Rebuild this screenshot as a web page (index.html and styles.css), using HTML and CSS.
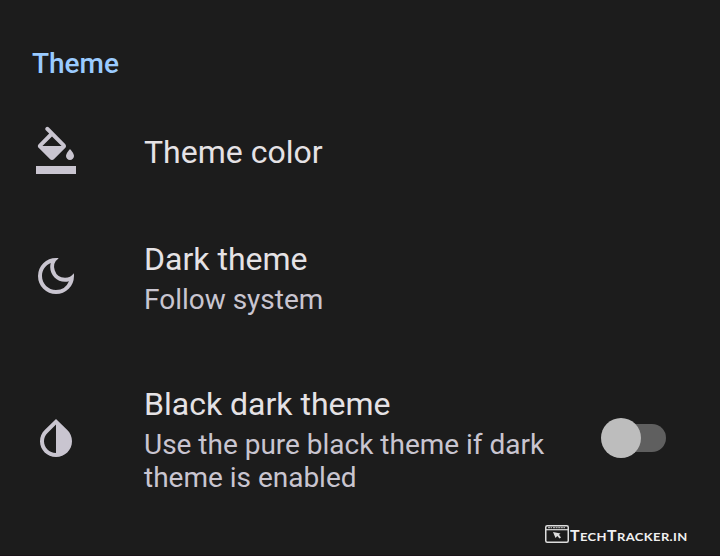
FILE: index.html
```html
<!DOCTYPE html>
<html lang="en">
<head>
<meta charset="utf-8">
<title>Theme</title>
<link rel="stylesheet" href="styles.css">
</head>
<body>
<main class="settings">
  <h1 class="section">Theme</h1>
  <div class="row row-color">
    <svg class="icon" viewBox="0 0 24 24"><path d="M16.56 8.94L8.3.68Q7.62 0 6.9.7 6.2 1.4 6.9 2.1l1.69 1.69-5.15 5.15a1.49 1.49 0 0 0 0 2.12l5.5 5.5c.29.29.68.44 1.06.44s.77-.15 1.06-.44l5.5-5.5c.59-.58.59-1.53 0-2.12zM5.21 10L10 5.21 14.79 10H5.21zM19 11.5s-2 2.17-2 3.5c0 1.1.9 2 2 2s2-.9 2-2c0-1.33-2-3.5-2-3.5zM2 20h20v4H2z"/></svg>
    <div class="text"><div class="title">Theme color</div></div>
  </div>
  <div class="row row-dark">
    <svg class="icon" viewBox="0 0 24 24"><path d="M9.37 5.51A7.35 7.35 0 0 0 9.1 7.5c0 4.08 3.32 7.4 7.4 7.4.68 0 1.35-.09 1.99-.27A7.014 7.014 0 0 1 12 19c-3.86 0-7-3.14-7-7 0-2.93 1.81-5.45 4.37-6.49zM12 3a9 9 0 1 0 9 9c0-.46-.04-.92-.1-1.36a5.389 5.389 0 0 1-4.4 2.26 5.403 5.403 0 0 1-3.14-9.8c-.44-.06-.9-.1-1.36-.1z"/></svg>
    <div class="text"><div class="title">Dark theme</div><div class="summary">Follow system</div></div>
  </div>
  <div class="row row-black">
    <svg class="icon" viewBox="0 0 24 24"><path d="M12 4.81V19c-3.31 0-6-2.63-6-5.87 0-1.56.62-3.03 1.75-4.14L12 4.81M6.35 7.56C4.9 8.99 4 10.96 4 13.13 4 17.48 7.58 21 12 21s8-3.52 8-7.87c0-2.17-.9-4.14-2.35-5.57L12 2 6.35 7.56z"/></svg>
    <div class="text"><div class="title">Black dark theme</div><div class="summary">Use the pure black theme if dark theme is enabled</div></div>
    <div class="switch"><span class="thumb"></span></div>
  </div>
</main>
<footer class="brand">
  <svg class="logo" viewBox="0 0 24 18"><rect x=".75" y=".75" width="22.5" height="16.5" rx="1.5" fill="none" stroke="#ddd" stroke-width="1.5"/><path d="M1 4.7h22" stroke="#ddd" stroke-width="1.2"/><path d="M3 2.6h4M8 2.6h12" stroke="#aaa" stroke-width="1.2" stroke-dasharray="2 .6"/><path d="M8 7l7.500 1.500-1.500 1.200 2 2.800-1.500 1-2.200-2.500-1.800 2z" fill="#ddd"/></svg>
  <span class="brand-name">T<small>ECH</small>T<small>RACKER.IN</small></span>
</footer>
</body>
</html>
```
FILE: styles.css
```css
* { box-sizing: border-box; }
body { margin: 0; height: 556px; overflow: hidden; background: #1c1c1c; border-bottom: 1px solid #1a1318; font-family: Roboto, sans-serif; color: #e5e2e5; display: flex; flex-direction: column; }
.section { margin: 47px 0 0 32px; font-size: 28px; line-height: 33px; font-weight: 500; color: #9acbff; }
.row { display: flex; align-items: center; padding-left: 32px; }
.row-color { margin-top: 40px; height: 64px; }
.row-color .icon { margin-bottom: 4px; }
.row-dark { margin-top: 52px; height: 80px; }
.row-dark .text { padding-top: 3px; }
.row-black { margin-top: 68px; height: 110px; }
.icon { width: 48px; height: 48px; margin-right: 64px; fill: #c9c5d0; flex: none; }
.text { width: 420px; }
.title { font-size: 32px; line-height: 38px; }
.summary { margin-top: 5px; font-size: 28px; line-height: 33px; letter-spacing: -0.01px; color: #c9c5d0; }
.switch { width: 64px; height: 28px; border-radius: 14px; margin: 0 0 2px 38px; background: #5f5f5f; display: flex; align-items: center; }
.thumb { width: 40px; height: 40px; flex: none; margin-left: -1px; border-radius: 50%; background: #bdbdbd; }
.brand { margin: auto 0 11px 545px; display: flex; align-items: center; color: #f0f0f0; }
.logo { width: 24px; height: 18px; flex: none; margin-bottom: 1px; }
.brand-name { margin: 4px 0 0 1px; font-family: Lato, sans-serif; font-size: 14.5px; line-height: 15px; font-weight: 700; letter-spacing: .35px; transform: scaleX(1.1); transform-origin: left center; }
.brand-name small { font-size: 11.8px; }
```
